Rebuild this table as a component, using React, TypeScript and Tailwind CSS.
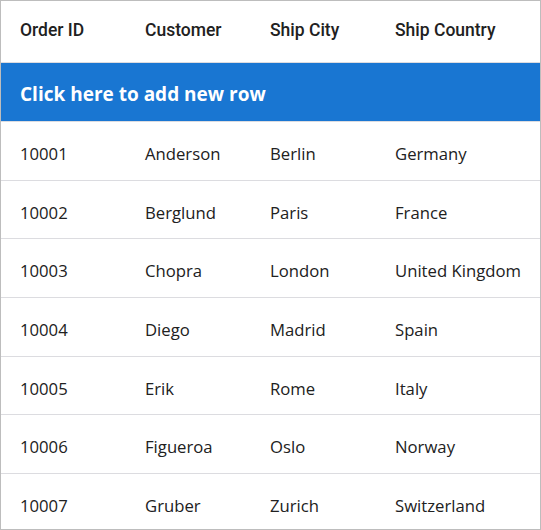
const columns = ["Order ID", "Customer", "Ship City", "Ship Country"];

const rows = [
  ["10001", "Anderson", "Berlin", "Germany"],
  ["10002", "Berglund", "Paris", "France"],
  ["10003", "Chopra", "London", "United Kingdom"],
  ["10004", "Diego", "Madrid", "Spain"],
  ["10005", "Erik", "Rome", "Italy"],
  ["10006", "Figueroa", "Oslo", "Norway"],
  ["10007", "Gruber", "Zurich", "Switzerland"],
];

export default function App() {
  return (
    <div className="w-[541px] h-[530px] bg-white border border-[#bdbdbd] overflow-hidden">
      {/* Header */}
      <div className="grid grid-cols-[125px_125px_125px_1fr] h-[62px] items-center border-b border-[#dcdce0] pb-[3px]">
        {columns.map((c) => (
          <div key={c} className="pl-[19px] font-['Roboto',sans-serif] font-medium text-[17.5px] text-[#212121]">
            {c}
          </div>
        ))}
      </div>

      {/* Add new row */}
      <div className="flex items-center h-[59px] bg-[#1976d2] pl-[19px] pt-[5px] border-b border-[#dcdce0]">
        <span className="font-['Open_Sans',sans-serif] font-bold text-[19px] text-white">Click here to add new row</span>
      </div>

      {/* Data rows */}
      {rows.map((r) => (
        <div
          key={r[0]}
          className="grid grid-cols-[125px_125px_125px_1fr] h-[58.7px] items-center pt-[5px] border-b border-[#dcdce0] last:border-b-0"
        >
          {r.map((v, i) => (
            <div key={i} className="pl-[19px] font-['Open_Sans',sans-serif] text-[16.7px] text-[#212121]">
              {v}
            </div>
          ))}
        </div>
      ))}
    </div>
  );
}
